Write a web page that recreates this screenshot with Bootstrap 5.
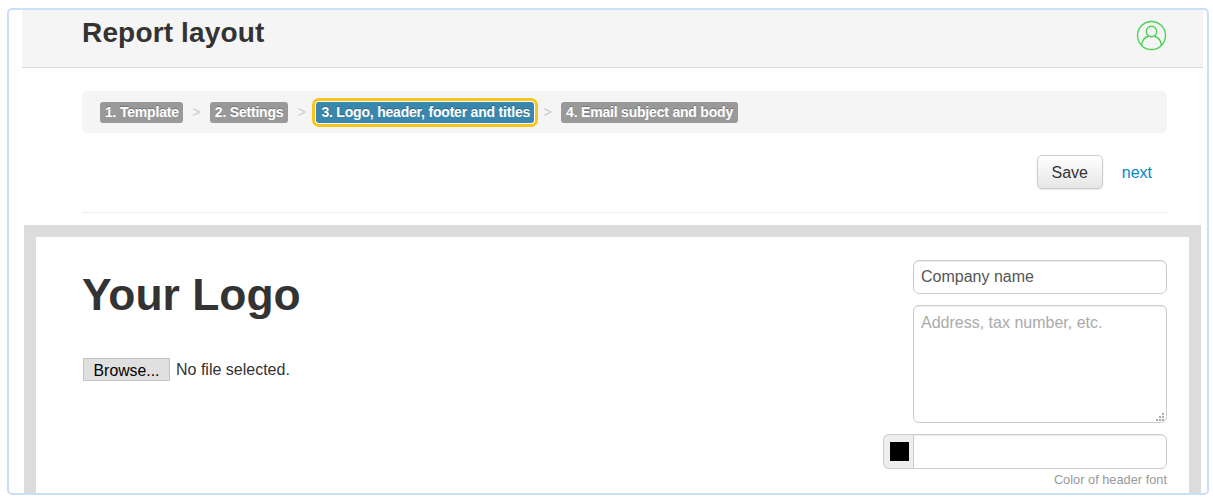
<!DOCTYPE html>
<html lang="en">
  <head>
    <meta charset="UTF-8" />
    <title>Report layout</title>
    <link href="https://cdn.jsdelivr.net/npm/bootstrap@5.3.3/dist/css/bootstrap.min.css" rel="stylesheet" />
    <style>
      html, body { height: 498px; overflow: hidden; background: #fff; }
      body { font-family: "Liberation Sans", Arial, sans-serif; color: #333; padding: 8px 4px 3px 7px; font-size: 16px; }
      .app-frame { height: 487px; border: 2px solid #cbdff9; border-radius: 5px; overflow: hidden; }
      .top-bar { margin: 0 4px 0 13px; height: 58px; background: #f5f5f5; border-bottom: 1px solid #d9d9d9; padding: 6px 36px 0 60px; }
      .top-bar h1 { font-size: 28px; letter-spacing: .16px; line-height: 33px; font-weight: 700; margin: 0; color: #333; }
      .steps-bar { margin: 23px 40px 0 73px; height: 42px; background: #f5f5f5; border-radius: 5px; padding: 0 18px; }
      .step { background: #999; color: #fff; font-size: 14px; letter-spacing: -.2px; font-weight: 700; line-height: 16px; padding: 2px 5px 3px; border-radius: 3px; white-space: nowrap; text-shadow: 0 -1px 0 rgba(0,0,0,.25); }
      .step-first { padding-right: 4px; }
      .step-now { background: #3a87ad; padding-right: 4px; box-shadow: 0 0 0 1px #fff, 0 0 0 4px #f8c41e; margin-left: 1px; }
      .step-sep { color: #ccc; font-size: 14px; width: 27px; text-align: center; }
      .action-row { margin: 22px 40px 0 73px; height: 58px; padding-right: 15px; border-bottom: 1px solid #eee; }
      .save-btn { height: 34px; width: 66px; padding: 2px 0 0; font-size: 16px; color: #333; border: 1px solid #ccc; border-radius: 5px; background: linear-gradient(#fff, #e6e6e6); box-shadow: 0 1px 2px rgba(0,0,0,.1); }
      .next-link { color: #0088cc; text-decoration: none; margin: 6px 0 0 19px; }
      .paper-wrap { margin: 12px 6px 0 15px; height: 270px; border: 12px solid #dcdcdc; border-bottom: 0; background: #fff; padding: 23px 22px 0 46px; }
      .logo-title { font-size: 44.4px; line-height: 56px; font-weight: 700; margin: 7px 0 0; color: #333; }
      .browse-row { margin-top: 35px; font-size: 16px; line-height: 24px; }
      .browse-btn { height: 23px; width: 87px; padding: 0 0 1px; font-size: 15.8px; color: #000; background: #e0e0e0; border: 1px solid #c4c4c4; border-radius: 0; margin-right: 6px; margin-left: 1px; }
      .side-col { width: 284px; }
      .side-col .form-control { font-size: 16px; color: #555; border: 1px solid #ccc; border-radius: 6px; padding: 4px 7px; box-shadow: inset 0 1px 1px rgba(0,0,0,.075); }
      .side-col .form-control::placeholder { color: #aaa; }
      .name-input { width: 254px; height: 34px; }
      .addr-input { width: 254px; height: 118px; margin-top: 11px; padding-top: 5px !important; }
      .addr-input::-webkit-resizer { background: url("data:image/svg+xml,%3Csvg xmlns='http://www.w3.org/2000/svg' width='15' height='15'%3E%3Cg fill='%23aaa'%3E%3Crect x='11' y='6' width='2' height='2'/%3E%3Crect x='8' y='9' width='2' height='2'/%3E%3Crect x='11' y='9' width='2' height='2'/%3E%3Crect x='5' y='12' width='2' height='2'/%3E%3Crect x='8' y='12' width='2' height='2'/%3E%3Crect x='11' y='12' width='2' height='2'/%3E%3C/g%3E%3C/svg%3E") no-repeat; }
      .color-group { width: 284px; height: 35px; margin-top: 11px; }
      .color-group .input-group-text { width: 31px; padding: 0; background: #eee; border: 1px solid #ccc; border-right: 0; border-radius: 6px 0 0 6px; justify-content: center; }
      .color-group .form-control { height: 35px; border-radius: 0 6px 6px 0; }
      .swatch { width: 19px; height: 19px; background: #000; display: block; }
      .color-hint { font-size: 12.8px; line-height: 14px; color: #999; margin-top: 4px; text-align: right; }
    </style>
  </head>
  <body>
    <div class="app-frame">
      <div class="top-bar d-flex justify-content-between">
        <h1>Report layout</h1>
        <svg class="mt-1" width="31" height="31" viewBox="0 0 31 31" fill="none" stroke="#4cd45a" stroke-width="1.4">
          <circle cx="15.5" cy="15.5" r="14" />
          <circle cx="15.5" cy="11.5" r="5.2" />
          <path d="M5.6 25.4c.6-5.6 3.6-8.6 7.2-9.2M25.4 25.4c-.6-5.6-3.6-8.6-7.2-9.2" />
        </svg>
      </div>

      <div class="steps-bar d-flex align-items-center">
        <span class="step step-first">1. Template</span>
        <span class="step-sep">&gt;</span>
        <span class="step">2. Settings</span>
        <span class="step-sep">&gt;</span>
        <span class="step step-now">3. Logo, header, footer and titles</span>
        <span class="step-sep">&gt;</span>
        <span class="step">4. Email subject and body</span>
      </div>

      <div class="action-row d-flex justify-content-end align-items-start">
        <button class="btn save-btn" type="button">Save</button>
        <a class="next-link" href="#">next</a>
      </div>

      <div class="paper-wrap d-flex justify-content-between">
        <div>
          <h2 class="logo-title">Your Logo</h2>
          <div class="browse-row d-flex align-items-start">
            <button class="browse-btn" type="button">Browse...</button>
            <span>No file selected.</span>
          </div>
        </div>
        <div class="side-col d-flex flex-column align-items-end">
          <input class="form-control name-input" value="Company name" />
          <textarea class="form-control addr-input" placeholder="Address, tax number, etc."></textarea>
          <div class="input-group color-group flex-nowrap">
            <span class="input-group-text"><span class="swatch"></span></span>
            <input class="form-control" />
          </div>
          <div class="color-hint">Color of header font</div>
        </div>
      </div>
    </div>
    <script src="https://cdn.jsdelivr.net/npm/bootstrap@5.3.3/dist/js/bootstrap.bundle.min.js"></script>
  </body>
</html>
